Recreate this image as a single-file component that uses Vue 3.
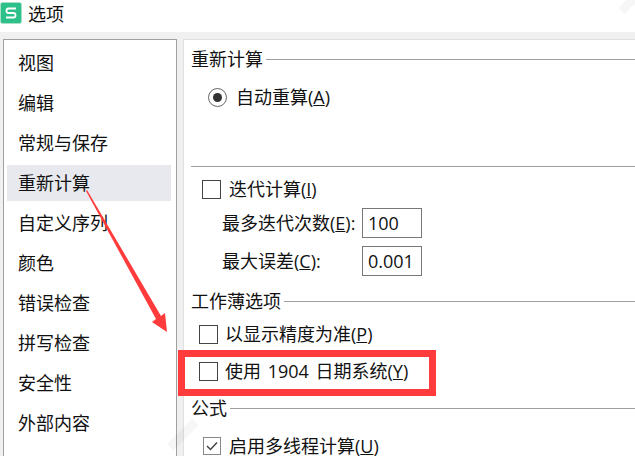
<template>
  <div class="window">
    <header class="titlebar">
      <svg class="logo" width="22" height="22" viewBox="0 0 22 22">
        <rect x="0.5" y="0.5" width="21" height="21" rx="2" fill="#2cc08a" stroke="#a8e0c8" />
        <path d="M16 6.5H8.5Q6.5 6.5 6.5 8.5V9Q6.5 11 8.5 11H13.5Q15.5 11 15.5 13V13.5Q15.5 15.5 13.5 15.5H6" fill="none" stroke="#fff" stroke-width="1.8" />
      </svg>
      <span class="title">选项</span>
    </header>

    <main class="body">
      <nav class="sidebar">
        <div
          v-for="item in navItems"
          :key="item"
          class="nav-item"
          :class="{ active: item === '重新计算' }"
        >
          {{ item }}
        </div>
      </nav>

      <section class="panel">
        <div class="group-title first"><span>重新计算</span><i></i></div>
        <label class="option radio-row">
          <span class="radio"><b></b></span>
          <span>自动重算(<u>A</u>)</span>
        </label>
        <div class="rule"></div>

        <label class="option iter-row">
          <span class="check"></span>
          <span>迭代计算(<u>I</u>)</span>
        </label>
        <div class="field first-field">
          <span class="field-label">最多迭代次数(<u>E</u>):</span>
          <span class="input">100</span>
        </div>
        <div class="field">
          <span class="field-label">最大误差(<u>C</u>):</span>
          <span class="input">0.001</span>
        </div>

        <div class="group-title book"><span>工作薄选项</span><i></i></div>
        <label class="option book-row">
          <span class="check"></span>
          <span>以显示精度为准(<u>P</u>)</span>
        </label>
        <label class="option date-row">
          <span class="check"></span>
          <span class="spaced">使用 1904 日期系统(<u>Y</u>)</span>
        </label>

        <div class="group-title formula"><span>公式</span><i></i></div>
        <label class="option thread-row">
          <span class="check on">
            <svg width="16" height="16" viewBox="0 0 16 16"><path d="M3 8L6.5 11.5L13 4.5" fill="none" stroke="#444" stroke-width="1.5" /></svg>
          </span>
          <span>启用多线程计算(<u>U</u>)</span>
        </label>
      </section>
    </main>

    <!-- 截图上的红色标注和水印 -->
    <div class="mark-box"></div>
    <svg class="mark-arrow" width="635" height="456" viewBox="0 0 635 456">
      <polygon points="86,191 87,190 161,316 165,313 167,332 152,322 156,319" fill="#ff3b3b" />
    </svg>
    <div class="watermark wm-bottom"></div>
    <div class="watermark wm-top"></div>
  </div>
</template>

<script setup>
const navItems = [
  '视图',
  '编辑',
  '常规与保存',
  '重新计算',
  '自定义序列',
  '颜色',
  '错误检查',
  '拼写检查',
  '安全性',
  '外部内容',
]
</script>

<style>
html,
body {
  margin: 0;
  overflow: hidden;
}
</style>

<style scoped>
.window {
  position: relative;
  width: 635px;
  height: 456px;
  overflow: hidden;
  background: #f0f0f0;
  color: #111;
  font-family: "Open Sans", "Noto Sans CJK SC", sans-serif;
  font-size: 18px;
  line-height: 24px;
}

.titlebar {
  display: flex;
  align-items: flex-start;
  gap: 6px;
  height: 32px;
  padding-top: 2px;
  box-sizing: border-box;
  background: #fff;
}

.body {
  display: flex;
  gap: 6px;
  height: 424px;
  padding: 7px 0 0 3px;
  box-sizing: border-box;
}

.sidebar {
  flex: none;
  width: 174px;
  padding: 5px 5px 0 3px;
  box-sizing: border-box;
  background: #fff;
  border: 1px solid #a0a0a0;
  border-bottom: 0;
}

.nav-item {
  height: 36px;
  margin-bottom: 4px;
  padding-left: 11px;
  line-height: 36px;
}

.nav-item.active {
  background: #e7e9ee;
}

.panel {
  flex: 1;
  padding-left: 7px;
  background: #fff;
  border: 1px solid #e0e0e0;
  border-width: 1px 0 0 1px;
}

.group-title {
  display: flex;
  align-items: center;
  gap: 3px;
}

.group-title i {
  flex: 1;
  height: 1px;
  background: #a0a0a0;
}

.group-title.first {
  margin-top: 7px;
}

.group-title.book,
.group-title.formula {
  margin-top: 13px;
}

.option {
  display: flex;
  align-items: center;
}

.radio-row {
  margin: 14px 0 0 17px;
  gap: 9px;
}

.radio {
  display: flex;
  align-items: center;
  justify-content: center;
  width: 19px;
  height: 19px;
  box-sizing: border-box;
  border: 1px solid #666;
  border-radius: 50%;
}

.radio b {
  width: 9px;
  height: 9px;
  border-radius: 50%;
  background: #333;
}

.rule {
  height: 1px;
  margin-top: 57px;
  background: #a0a0a0;
}

.check {
  flex: none;
  display: flex;
  width: 19px;
  height: 19px;
  box-sizing: border-box;
  border: 1px solid #444;
  background: #fff;
}

.check.on {
  width: 18px;
  height: 18px;
  border-color: #888;
}

.iter-row {
  margin: 10px 0 0 11px;
  gap: 8px;
}

.field {
  display: flex;
  align-items: center;
  margin: 8px 0 0 31px;
}

.first-field {
  margin-top: 7px;
}

.field-label {
  width: 140px;
}

.input {
  width: 60px;
  height: 30px;
  padding-left: 5px;
  box-sizing: border-box;
  border: 1px solid #777;
  line-height: 28px;
}

.book-row {
  margin: 9px 0 0 8px;
  gap: 7px;
}

.date-row {
  margin: 13px 0 0 8px;
  gap: 7px;
}

.spaced {
  word-spacing: 2px;
}

.thread-row {
  margin: 14px 0 0 12px;
  gap: 8px;
}

.mark-box {
  position: absolute;
  left: 178px;
  top: 350px;
  width: 258px;
  height: 46px;
  box-sizing: border-box;
  border: 7px solid #ff3b3b;
}

.mark-arrow {
  position: absolute;
  left: 0;
  top: 0;
  pointer-events: none;
}

.watermark {
  position: absolute;
  height: 9px;
  background: rgba(0, 0, 0, 0.035);
  transform: rotate(-45deg);
  pointer-events: none;
}

.wm-bottom {
  left: 165px;
  top: 430px;
  width: 36px;
}

.wm-top {
  left: 618px;
  top: -2px;
  width: 24px;
}
</style>
